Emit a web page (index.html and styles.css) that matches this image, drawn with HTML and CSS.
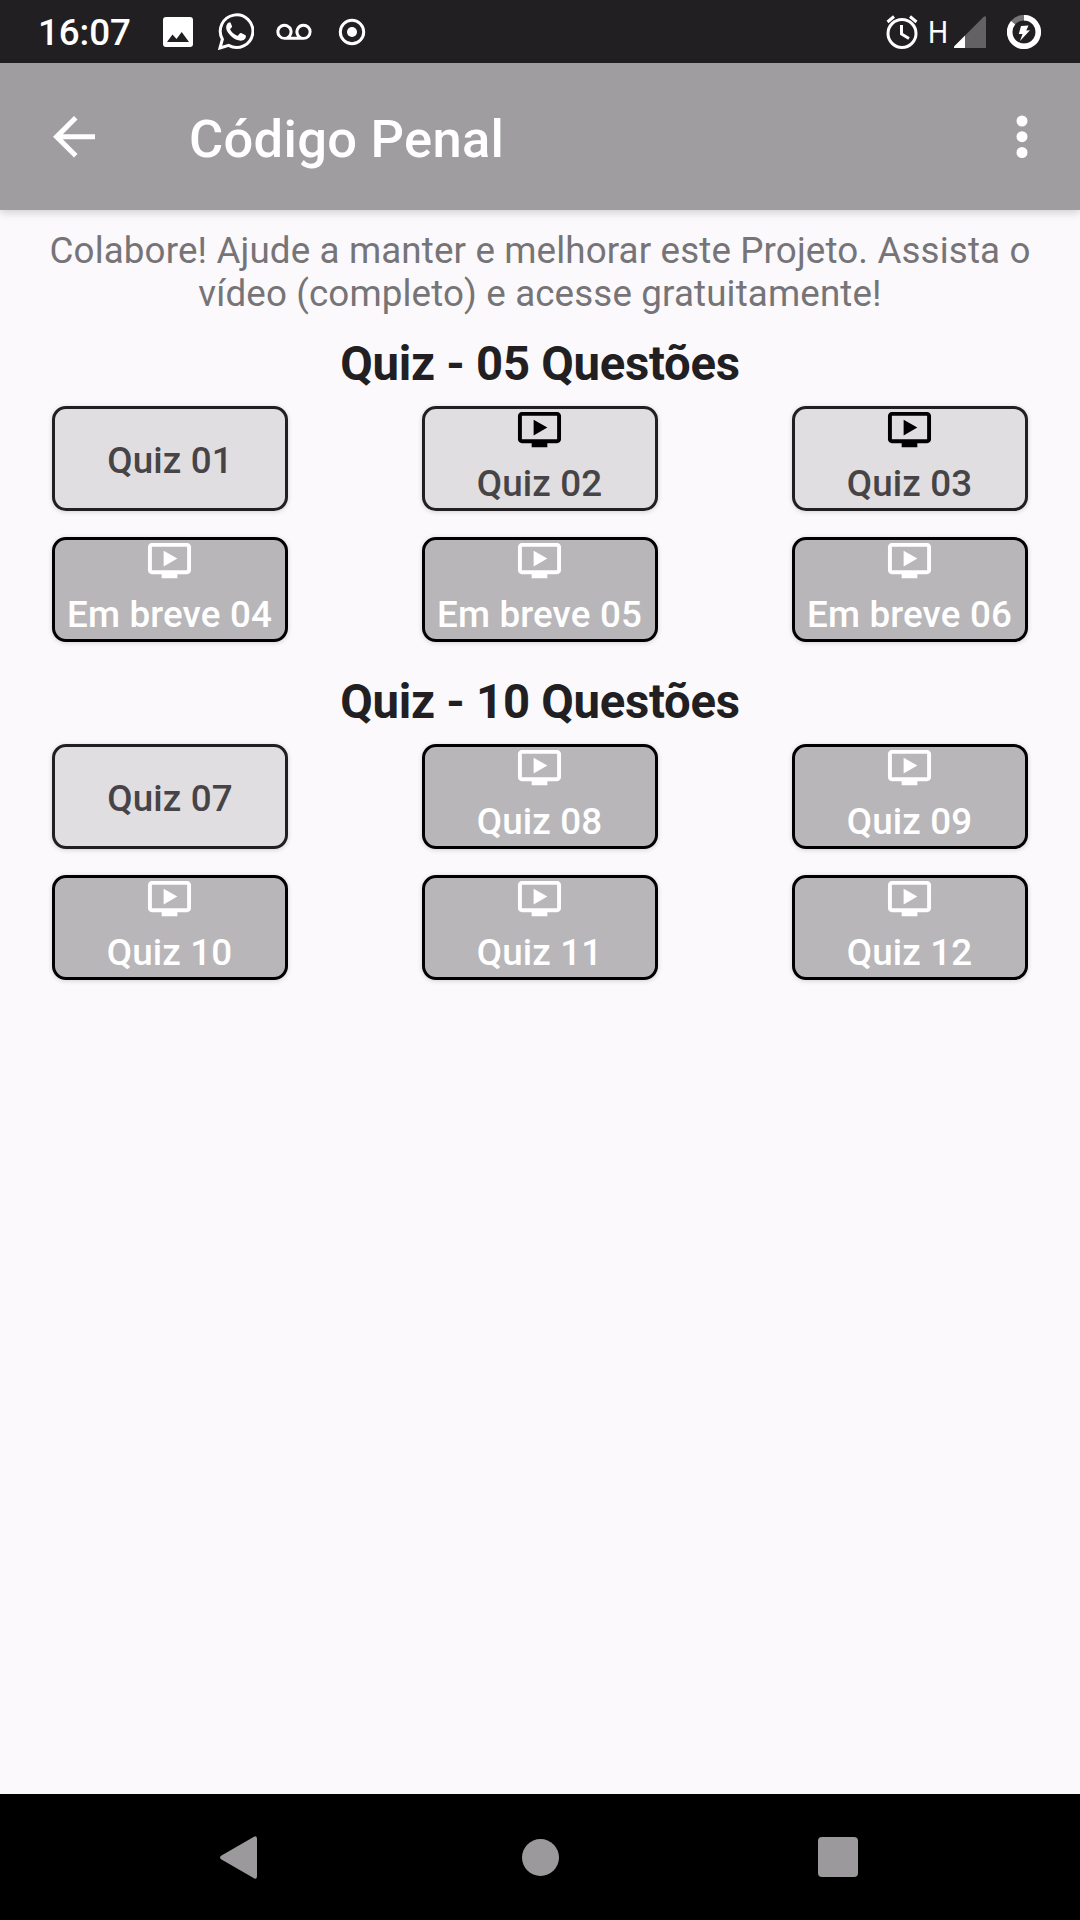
FILE: index.html
```html
<!DOCTYPE html>
<html lang="pt-BR">
<head>
    <meta charset="UTF-8">
    <meta name="viewport" content="width=device-width, initial-scale=1.0">
    <title>Código Penal</title>
    <link rel="stylesheet" href="styles.css">
</head>
<body>
    <svg class="defs" width="0" height="0">
        <symbol id="video" viewBox="0 0 24 24">
            <path d="M21 3H3c-1.11 0-2 .89-2 2v12c0 1.1.89 2 2 2h5v2h8v-2h5c1.1 0 1.99-.9 1.99-2L23 5c0-1.11-.9-2-2-2zm0 14H3V5h18v12zM9 7v8l7-4z"/>
        </symbol>
    </svg>

    <div class="status-bar">
        <span class="clock">16:07</span>
        <svg class="icon-image" viewBox="0 0 30 30">
            <path fill-rule="evenodd" d="M3 0h24a3 3 0 0 1 3 3v24a3 3 0 0 1-3 3H3a3 3 0 0 1-3-3V3a3 3 0 0 1 3-3zM4 25h22l-7.3-10-5.2 7-4-4.500z"/>
        </svg>
        <svg class="icon-whatsapp" viewBox="0 0 36 37">
            <path class="line" d="M2 35l2.400-8.800a16.300 16.300 0 1 1 6.200 6.200z"/>
            <path d="M12.600 9.500h-1.500c-.8 0-3 1.900-3 5 0 3 2.400 6.200 4.800 8.500 3 2.900 6.700 4.700 10 4.700 3 0 5-2 5-4.400 0-.8-.2-1-.8-1.300l-4-1.900c-.6-.3-1-.2-1.400.4l-1.600 1.900c-.4.5-.8.500-1.400.2-3.200-1.500-5-3.300-6.400-5.800-.3-.5 0-.8.400-1.200l1.100-1.400c.3-.4.300-.8.100-1.300l-1.500-3.600c-.3-.6-.4-.7-.8-.8z"/>
        </svg>
        <svg class="icon-voicemail" viewBox="0 0 24 11.600">
            <path d="M18.500.5a5.500 5.500 0 0 0-4.400 8.800H9.900a5.500 5.500 0 1 0-4.400 2.200h13a5.500 5.500 0 0 0 0-11zm-13 9a3.500 3.500 0 1 1 0-7 3.500 3.500 0 0 1 0 7zm13 0a3.500 3.500 0 1 1 0-7 3.500 3.500 0 0 1 0 7z"/>
        </svg>
        <svg class="icon-record" viewBox="0 0 28 28">
            <circle class="line" cx="14" cy="14" r="11.700"/>
            <circle cx="14" cy="14" r="5"/>
        </svg>
        <div class="status-right">
            <svg class="icon-alarm" viewBox="0 0 32 34">
                <circle class="line" cx="16" cy="18.500" r="14"/>
                <path class="line" d="M15.500 10v9l7.500 4.500M1.500 7L8 1.500M30.500 7L24 1.500"/>
            </svg>
            <span class="network">H</span>
            <svg class="icon-signal" viewBox="0 0 32 32">
                <path class="dim" d="M30 0.500q2-1 2 1.500V32H11V19.500z"/>
                <path d="M11 19.500V32H1q-2 0-.5-2z"/>
            </svg>
            <svg class="icon-battery" viewBox="0 0 34 34">
                <circle class="ring dim-ring" cx="17" cy="17" r="14.300"/>
                <path class="ring" d="M17 2.700A14.300 14.300 0 1 1 6.100 7.700"/>
                <path d="M14 11l7.500-.5-2.300 5 3.800-.2L13 26l2.500-7h-3.700z"/>
            </svg>
        </div>
    </div>

    <div class="app-bar">
        <svg class="icon-back" viewBox="0 0 42 42">
            <path d="M42 18.300v4.900H9.800L24.500 38 21 41.500 0 20.700 21 0l3.500 3.500L9.800 18.300z"/>
        </svg>
        <h1 class="title">Código Penal</h1>
        <svg class="icon-menu" viewBox="0 0 12 44">
            <circle cx="6" cy="6" r="5.500"/>
            <circle cx="6" cy="21.700" r="5.500"/>
            <circle cx="6" cy="37.500" r="5.500"/>
        </svg>
    </div>

    <div class="content">
        <p class="intro">Colabore! Ajude a manter e melhorar este Projeto. Assista o<br>vídeo (completo) e acesse gratuitamente!</p>

        <h2 class="section-title">Quiz - 05 Questões</h2>
        <div class="buttons">
            <button class="quiz">Quiz 01</button>
            <button class="quiz video"><svg><use href="#video"/></svg>Quiz 02</button>
            <button class="quiz video"><svg><use href="#video"/></svg>Quiz 03</button>
            <button class="quiz video locked"><svg><use href="#video"/></svg>Em breve 04</button>
            <button class="quiz video locked"><svg><use href="#video"/></svg>Em breve 05</button>
            <button class="quiz video locked"><svg><use href="#video"/></svg>Em breve 06</button>
        </div>

        <h2 class="section-title">Quiz - 10 Questões</h2>
        <div class="buttons">
            <button class="quiz">Quiz 07</button>
            <button class="quiz video locked"><svg><use href="#video"/></svg>Quiz 08</button>
            <button class="quiz video locked"><svg><use href="#video"/></svg>Quiz 09</button>
            <button class="quiz video locked"><svg><use href="#video"/></svg>Quiz 10</button>
            <button class="quiz video locked"><svg><use href="#video"/></svg>Quiz 11</button>
            <button class="quiz video locked"><svg><use href="#video"/></svg>Quiz 12</button>
        </div>
    </div>

    <div class="nav-bar">
        <svg class="nav-back" viewBox="0 0 37 43">
            <path d="M34 .8Q37-1 37 3v37q0 4-3 2.200L1.500 23.500q-3-2 0-4z"/>
        </svg>
        <div class="nav-home"></div>
        <div class="nav-recent"></div>
    </div>
</body>
</html>
```

FILE: styles.css
```css
body {
    display: flex;
    flex-direction: column;
    height: 100vh;
    margin: 0;
    overflow: hidden;
    background-color: #fbf9fc;
    font-family: Roboto, "Liberation Sans", sans-serif;
}

svg {
    display: block;
    flex: none;
    fill: currentColor;
}

.defs {
    position: absolute;
}

.line {
    fill: none;
    stroke: currentColor;
    stroke-width: 3;
}

/* status bar */
.status-bar {
    display: flex;
    align-items: center;
    flex: none;
    box-sizing: border-box;
    height: 63px;
    padding: 0 39px 0 38px;
    background-color: #221f23;
    color: #fff;
}

.clock {
    width: 125px;
    padding-top: 2px;
    font-size: 36.75px;
    font-weight: 500;
    line-height: 43px;
    letter-spacing: -0.1px;
}

.icon-image {
    width: 30px;
    height: 30px;
}

.icon-whatsapp {
    width: 36px;
    height: 37px;
    margin-left: 25px;
}

.icon-voicemail {
    width: 36px;
    height: 17px;
    margin-left: 22px;
}

.icon-record {
    width: 28px;
    height: 28px;
    margin-left: 26px;
}

.status-right {
    display: flex;
    align-items: center;
    margin-left: auto;
}

.icon-alarm {
    width: 32px;
    height: 34px;
}

.network {
    width: 26px;
    margin-left: 10px;
    font-size: 32px;
    font-weight: 400;
    line-height: 36px;
    transform: scaleX(0.88);
    transform-origin: left;
}

.icon-signal {
    width: 32px;
    height: 32px;
}

.dim {
    fill: #646165;
}

.icon-battery {
    width: 34px;
    height: 34px;
    margin-left: 21px;
}

.ring {
    fill: none;
    stroke: currentColor;
    stroke-width: 5.500;
}

.dim-ring {
    stroke: #777478;
}

/* app bar */
.app-bar {
    display: flex;
    align-items: center;
    flex: none;
    box-sizing: border-box;
    height: 147px;
    padding: 0 52px 0 53px;
    background-color: #9f9d9f;
    box-shadow: 0 3px 8px rgba(0, 0, 0, 0.16);
    color: #fff;
}

.icon-back {
    width: 42px;
    height: 42px;
}

.title {
    margin: 4px auto 0 94px;
    font-size: 52.5px;
    font-weight: 500;
    line-height: 62px;
    letter-spacing: 0.28px;
}

.icon-menu {
    width: 12px;
    height: 44px;
}

/* content */
.content {
    flex: 1;
    padding: 19px 52px 0;
}

.intro {
    margin: 0 -20px;
    color: #767477;
    font-size: 36.75px;
    line-height: 43px;
    letter-spacing: 0.13px;
    text-align: center;
    white-space: nowrap;
}

.section-title {
    margin: 21px 0 14px;
    color: #221f23;
    font-size: 47.25px;
    font-weight: 700;
    line-height: 56px;
    letter-spacing: -0.27px;
    text-align: center;
}

.buttons {
    display: grid;
    grid-template-columns: repeat(3, 236px);
    justify-content: space-between;
    row-gap: 26px;
    margin-bottom: 32px;
}

.quiz {
    display: flex;
    flex-direction: column;
    align-items: center;
    justify-content: center;
    height: 105px;
    padding: 3px 0 0;
    border: 3px solid #221f23;
    border-radius: 14px;
    background-color: #e0dee1;
    box-shadow: 0 1px 5px rgba(0, 0, 0, 0.16);
    color: #464447;
    font-family: inherit;
    font-size: 36.75px;
    font-weight: 500;
    line-height: 43px;
    letter-spacing: 0.15px;
    white-space: nowrap;
}

.video {
    justify-content: flex-start;
    padding: 0 1px 0 0;
}

.video svg {
    width: 47px;
    height: 47px;
    margin: -3px 1px 9px 0;
    color: #000;
}

.locked {
    border-color: #000;
    background-color: #b8b6b9;
    color: #fff;
}

.locked svg {
    color: #fff;
}

/* navigation bar */
.nav-bar {
    display: flex;
    align-items: center;
    justify-content: space-between;
    flex: none;
    box-sizing: border-box;
    height: 126px;
    padding: 0 222px 0 220px;
    background-color: #000;
    color: #9b999c;
}

.nav-back {
    width: 37px;
    height: 43px;
}

.nav-home {
    width: 37px;
    height: 37px;
    margin-left: 5px;
    border-radius: 50%;
    background-color: #9b999c;
}

.nav-recent {
    width: 40px;
    height: 40px;
    border-radius: 4px;
    background-color: #9b999c;
}
```
